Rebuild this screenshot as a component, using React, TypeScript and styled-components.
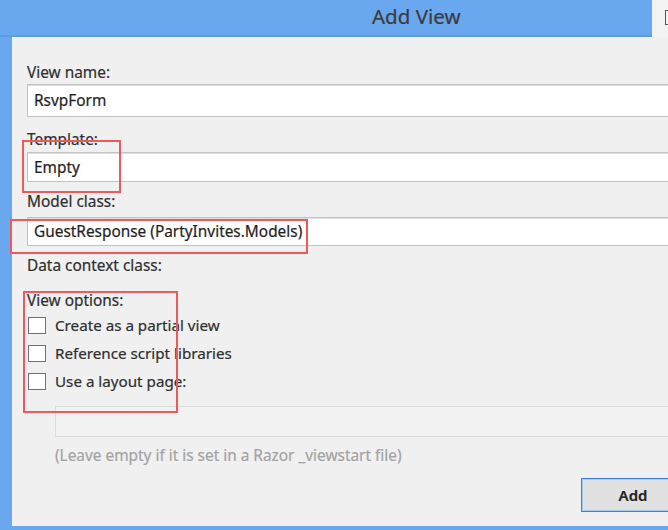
import React from "react";
import styled, { createGlobalStyle } from "styled-components";

const Global = createGlobalStyle`
  html, body { margin: 0; padding: 0; background: #69a7ee; }
  body {
    font-family: "Noto Sans", "Open Sans", sans-serif;
    -webkit-text-stroke: 0.2px currentColor;
  }
  * { box-sizing: border-box; }
`;

const Window = styled.div`
  position: relative;
  width: 668px;
  height: 530px;
  overflow: hidden;
  background: #69a7ee;
  display: flex;
  flex-direction: column;
`;

const TitleBar = styled.div`
  height: 37px;
  flex-shrink: 0;
  display: flex;
  box-shadow: inset 0 -2px 0 #5e9be2;
`;

const Title = styled.div`
  flex: 1;
  padding-left: 372px;
  line-height: 33px;
  font-size: 20.5px;
  color: #3b3b3b;
`;

const CornerButton = styled.div`
  width: 16px;
  background: #f3f3f3;
  padding: 10px 0 0 13px;
`;

const CornerGlyph = styled.span`
  display: block;
  width: 10px;
  height: 15px;
  border: 1px solid #555;
`;

const Panel = styled.div`
  flex: 1;
  margin: 0 0 4px 12px;
  background: #f0f0f0;
  padding: 26px 0 0 15px;
  display: flex;
  flex-direction: column;
`;

const Label = styled.div<{ $top?: number }>`
  margin-top: ${(p) => p.$top ?? 0}px;
  font-size: 15.4px;
  line-height: 20px;
  color: #2e2e2e;
`;

const TextBox = styled.div<{ $top?: number; $h: number }>`
  margin-top: ${(p) => p.$top ?? 0}px;
  margin-right: -4px;
  height: ${(p) => p.$h}px;
  background: #fff;
  border: 1px solid #c3c3c3;
  box-shadow: inset 0 1px 0 #dedede;
  display: flex;
  align-items: center;
  padding-left: 6px;
  font-size: 15.4px;
  color: #1e1e1e;
`;

const DisabledBox = styled.div`
  margin: 11px -4px 0 28px;
  height: 31px;
  background: #f2f2f2;
  border: 1px solid #dcdcdc;
`;

const CheckList = styled.div`
  display: flex;
  flex-direction: column;
`;

const CheckRow = styled.label`
  height: 28px;
  display: flex;
  align-items: center;
  gap: 9px;
  font-size: 15.2px;
  color: #2e2e2e;
`;

const Box = styled.span`
  width: 18px;
  height: 17px;
  margin-left: 1px;
  background: #fff;
  border: 1px solid #707070;
`;

const Hint = styled.div`
  margin: 9px 0 0 28px;
  font-size: 15.4px;
  line-height: 20px;
  color: #a3a3a3;
`;

const ButtonRow = styled.div`
  margin: 12px -17px 0 0;
  display: flex;
  justify-content: flex-end;
`;

const Button = styled.div`
  width: 104px;
  height: 34px;
  background: #e1e1e1;
  border: 1px solid #3a7fd8;
  box-shadow: inset 0 0 0 1px #a9cdf5;
  display: flex;
  align-items: center;
  justify-content: center;
  font-size: 15px;
  font-weight: 600;
  color: #222;
`;

const Annotation = styled.div<{ $x: number; $y: number; $w: number; $h: number }>`
  position: absolute;
  left: ${(p) => p.$x}px;
  top: ${(p) => p.$y}px;
  width: ${(p) => p.$w}px;
  height: ${(p) => p.$h}px;
  border: 2px solid #ec5a5c;
  pointer-events: none;
`;

const options = ["Create as a partial view", "Reference script libraries", "Use a layout page:"];

export default function App() {
  return (
    <>
      <Global />
      <Window>
        <TitleBar>
          <Title>Add View</Title>
          <CornerButton>
            <CornerGlyph />
          </CornerButton>
        </TitleBar>
        <Panel>
          <Label>View name:</Label>
          <TextBox $top={1} $h={33}>RsvpForm</TextBox>
          <Label $top={13}>Template:</Label>
          <TextBox $top={2} $h={30}>Empty</TextBox>
          <Label $top={10}>Model class:</Label>
          <TextBox $top={5} $h={29}>GuestResponse (PartyInvites.Models)</TextBox>
          <Label $top={10}>Data context class:</Label>
          <Label $top={15}>View options:</Label>
          <CheckList>
            {options.map((o) => (
              <CheckRow key={o}>
                <Box />
                {o}
              </CheckRow>
            ))}
          </CheckList>
          <DisabledBox />
          <Hint>(Leave empty if it is set in a Razor _viewstart file)</Hint>
          <ButtonRow>
            <Button>Add</Button>
          </ButtonRow>
        </Panel>
        <Annotation $x={22} $y={140} $w={99} $h={53} />
        <Annotation $x={10} $y={219} $w={298} $h={35} />
        <Annotation $x={23} $y={291} $w={155} $h={122} />
      </Window>
    </>
  );
}
